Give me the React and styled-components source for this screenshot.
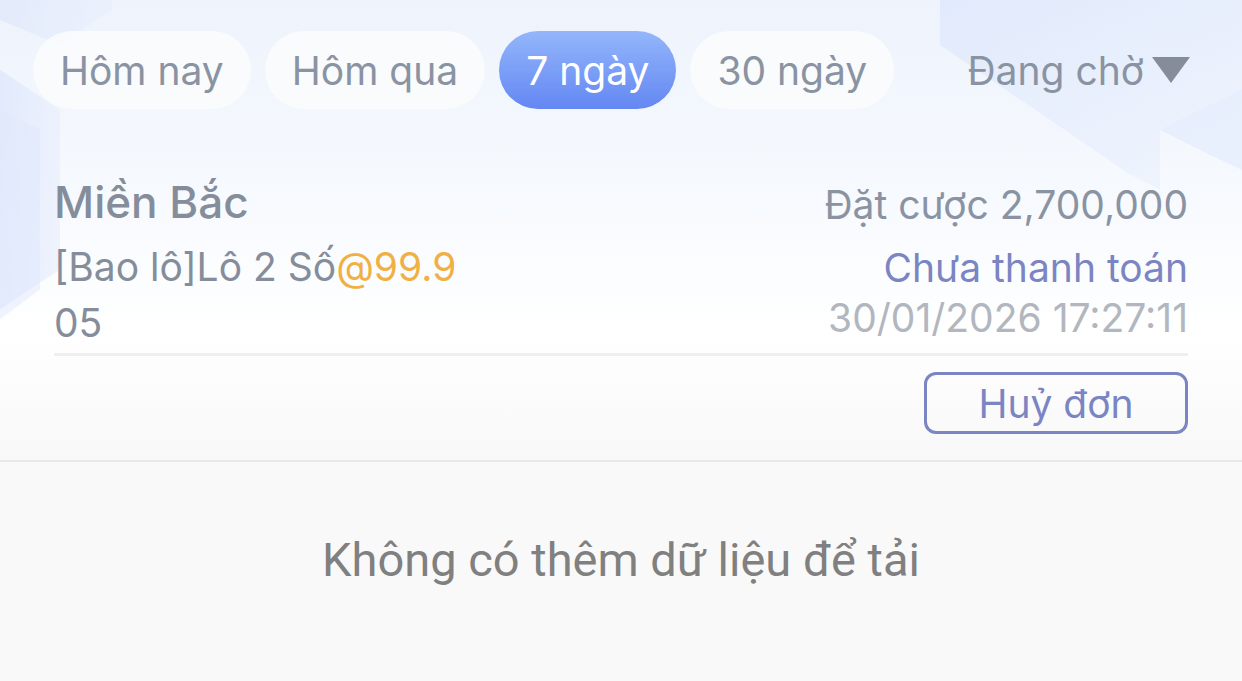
import styled, { createGlobalStyle } from 'styled-components';

const GlobalStyle = createGlobalStyle`
  * { box-sizing: border-box; }
  body {
    margin: 0;
    font-family: Inter, "Noto Sans", sans-serif;
    background: #f9f9f9;
  }
`;

const Page = styled.div`
  min-height: 100vh;
  background: #f9f9f9;
`;

const Header = styled.section`
  position: relative;
  overflow: hidden;
  background: linear-gradient(180deg, #eef3fc 0%, #f6f9fe 40%, #ffffff 72%, #f8f8f8 100%);
  border-bottom: 2px solid #e8e8e8;
  padding-bottom: 26px;
`;

const Decor = styled.svg`
  position: absolute;
  inset: 0;
  width: 100%;
  height: 100%;
  pointer-events: none;
`;

const Content = styled.div`
  position: relative;
`;

const Tabs = styled.nav`
  display: flex;
  align-items: center;
  gap: 14px;
  padding: 31px 52px 0 33px;
`;

const Tab = styled.button`
  height: 78px;
  padding: 0 27px;
  border: none;
  border-radius: 39px;
  font-family: inherit;
  font-size: 39px;
  color: ${(p) => (p.$active ? '#ffffff' : '#8a93a2')};
  background: ${(p) =>
    p.$active ? 'linear-gradient(180deg, #93b6fb 0%, #6487f3 100%)' : 'rgba(250, 251, 253, 0.85)'};
`;

const Dropdown = styled.button`
  margin-left: auto;
  display: flex;
  align-items: center;
  gap: 8px;
  border: none;
  background: none;
  padding: 0;
  font-family: inherit;
  font-size: 39px;
  color: #8a93a2;
`;

const Card = styled.div`
  padding: 64px 54px 0;
`;

const Row = styled.div`
  display: flex;
  justify-content: space-between;
  align-items: flex-start;
`;

const Left = styled.div`
  max-width: 430px;
`;

const Title = styled.div`
  font-size: 44px;
  line-height: 58px;
  font-weight: 500;
  color: #858d9b;
`;

const Detail = styled.div`
  margin-top: 8px;
  font-size: 39px;
  line-height: 56px;
  color: #858d9b;
  white-space: nowrap;
`;

const Odds = styled.span`
  color: #f0b043;
`;

const Right = styled.div`
  padding-top: 7px;
  text-align: right;
`;

const Line = styled.div`
  font-size: 39px;
  line-height: 50px;
  color: ${(p) => p.$color};
  margin-top: ${(p) => p.$gap || 0}px;
`;

const Divider = styled.hr`
  margin: 2px 0 0;
  border: none;
  height: 3px;
  background: #efefef;
`;

const Actions = styled.div`
  display: flex;
  justify-content: flex-end;
  margin-top: 16px;
`;

const CancelButton = styled.button`
  width: 264px;
  height: 62px;
  border: 3px solid #7b85c3;
  border-radius: 12px;
  background: transparent;
  font-family: inherit;
  font-size: 39px;
  color: #7b85c3;
`;

const EmptyNote = styled.p`
  margin: 0;
  padding-top: 70px;
  text-align: center;
  font-family: Roboto, "Noto Sans", sans-serif;
  font-size: 47px;
  line-height: 56px;
  color: #808080;
`;

const tabs = ['Hôm nay', 'Hôm qua', '7 ngày', '30 ngày'];

function App() {
  return (
    <>
      <GlobalStyle />
      <Page>
        <Header>
          <Decor viewBox="0 0 1242 461" preserveAspectRatio="none">
            <defs>
              <linearGradient id="hexL" x1="0" y1="0" x2="1" y2="0">
                <stop offset="0" stopColor="#dbe5fb" />
                <stop offset="1" stopColor="#e9effc" />
              </linearGradient>
              <linearGradient id="hexR" x1="0" y1="0" x2="1" y2="1">
                <stop offset="0" stopColor="#dde7fc" />
                <stop offset="1" stopColor="#eef3fd" />
              </linearGradient>
            </defs>
            <polygon points="0,0 112,0 112,10 60,45 0,20" fill="url(#hexL)" opacity="0.6" />
            <polygon points="0,70 60,110 60,270 0,310" fill="url(#hexL)" opacity="0.7" />
            <polygon points="0,110 40,130 40,290 0,320" fill="#dfe7fb" opacity="0.5" />
            <polygon points="940,0 1242,0 1242,170 1210,155 1160,130 1160,190 1130,175 940,45" fill="url(#hexR)" opacity="0.75" />
            <polygon points="1160,130 1242,90 1242,170 1210,155" fill="#e6edfc" opacity="0.8" />
          </Decor>
          <Content>
            <Tabs>
              {tabs.map((t) => (
                <Tab key={t} $active={t === '7 ngày'}>
                  {t}
                </Tab>
              ))}
              <Dropdown>
                Đang chờ
                <svg width="38" height="28" viewBox="0 0 38 28">
                  <polygon points="0,1 38,1 19,27" fill="#858d9b" />
                </svg>
              </Dropdown>
            </Tabs>
            <Card>
              <Row>
                <Left>
                  <Title>Miền Bắc</Title>
                  <Detail>
                    [Bao lô]Lô 2 Số<Odds>@99.9</Odds>
                    <br />
                    05
                  </Detail>
                </Left>
                <Right>
                  <Line $color="#8a93a2">Đặt cược 2,700,000</Line>
                  <Line $color="#7b85c3" $gap={13}>Chưa thanh toán</Line>
                  <Line $color="#b2b6be">30/01/2026 17:27:11</Line>
                </Right>
              </Row>
              <Divider />
              <Actions>
                <CancelButton>Huỷ đơn</CancelButton>
              </Actions>
            </Card>
          </Content>
        </Header>
        <EmptyNote>Không có thêm dữ liệu để tải</EmptyNote>
      </Page>
    </>
  );
}

export default App;
